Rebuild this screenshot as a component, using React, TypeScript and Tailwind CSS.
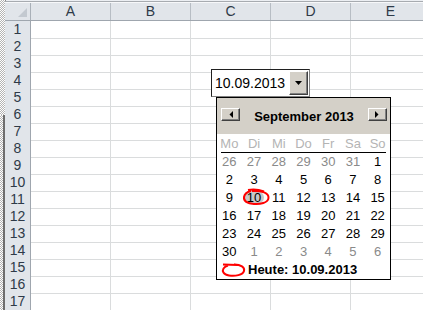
import React from "react";

const cols = ["A", "B", "C", "D", "E"];
const rows = Array.from({ length: 17 }, (_, i) => i + 1);
const dayNames = ["Mo", "Di", "Mi", "Do", "Fr", "Sa", "So"];

// September 2013, Monday first; "other" days come from Aug / Oct
const weeks: { d: number; other?: boolean }[][] = [
  [26, 27, 28, 29, 30, 31].map((d) => ({ d, other: true })).concat([{ d: 1 }]),
  [2, 3, 4, 5, 6, 7, 8].map((d) => ({ d })),
  [9, 10, 11, 12, 13, 14, 15].map((d) => ({ d })),
  [16, 17, 18, 19, 20, 21, 22].map((d) => ({ d })),
  [23, 24, 25, 26, 27, 28, 29].map((d) => ({ d })),
  [{ d: 30 }].concat([1, 2, 3, 4, 5, 6].map((d) => ({ d, other: true }))),
];

function NavButton({ dir }: { dir: "left" | "right" }) {
  return (
    <div className="w-[19px] h-[13px] bg-[#d4d0c8] border border-t-white border-l-white border-r-[#404040] border-b-[#404040] flex items-center justify-center shadow-[inset_-1px_-1px_0_#808080]">
      <svg width="4" height="7" viewBox="0 0 4 7">
        {dir === "left" ? (
          <polygon points="4,0 4,7 0.5,3.5" fill="#000" />
        ) : (
          <polygon points="0,0 0,7 3.5,3.5" fill="#000" />
        )}
      </svg>
    </div>
  );
}

export default function App() {
  return (
    <div className="relative w-[423px] h-[310px] overflow-hidden bg-white font-['Liberation_Sans',Arial,sans-serif] flex">
      {/* splitter strip on the far left */}
      <div className="w-[5px] flex flex-col shrink-0">
        <div className="h-[115px] bg-[image:repeating-conic-gradient(#b4b4b4_0_25%,#ffffff_0_50%)] bg-[length:2px_2px]" />
        <div className="flex-1 flex">
          <div className="w-[3px] bg-[image:repeating-conic-gradient(#b4b4b4_0_25%,#ffffff_0_50%)] bg-[length:2px_2px]" />
          <div className="w-[2px] bg-[#6e6e6e]" />
        </div>
      </div>

      <div className="flex-1 flex flex-col">
        {/* top strip */}
        <div className="h-[3px] bg-[#eceff3] border-l border-[#8c8c8c]" />
        <div className="h-[1px] bg-[#a7abb0]" />
        <div className="h-[3px] bg-[#f7f8fa]" />

        {/* column headers */}
        <div className="grid grid-cols-[26px_80px_80px_80px_80px_80px] h-[18px] bg-[#e1e5ea] border-b border-[#9fa6ae] text-[#2e3a48] text-[14px] leading-[17px]">
          <div className="border-r border-[#a9b0b8] relative">
            <svg className="absolute right-[3px] bottom-[3px]" width="9" height="9" viewBox="0 0 9 9">
              <polygon points="9,0 9,9 0,9" fill="#c3c9d0" />
            </svg>
          </div>
          {cols.map((c) => (
            <div key={c} className="border-r border-[#b7bdc4] text-center">
              {c}
            </div>
          ))}
        </div>

        {/* rows */}
        {rows.map((r) => (
          <div key={r} className="grid grid-cols-[26px_80px_80px_80px_80px_80px] h-[17px] shrink-0">
            <div className="bg-[#e1e5ea] border-r border-b border-r-[#9fa6ae] border-b-[#c3c9d0] text-center text-[14px] leading-[17px] text-[#2e3a48]">
              {r}
            </div>
            {cols.map((c) => (
              <div key={c} className="border-r border-b border-[#dadcdd]" />
            ))}
          </div>
        ))}
      </div>

      {/* date input over C4 */}
      <div className="absolute left-[211px] top-[69px] w-[99px] h-[28px] bg-white border border-[#202020] border-r-[#808080] border-b-[#808080] flex">
        <div className="flex-1 pl-[3px] text-[14px] leading-[26px] text-black">10.09.2013</div>
        <div className="w-[19px] my-[1px] mr-[1px] bg-[#d4d0c8] border border-t-white border-l-white border-r-[#404040] border-b-[#404040] flex items-center justify-center shadow-[inset_-1px_-1px_0_#808080]">
          <svg width="7" height="4" viewBox="0 0 7 4">
            <polygon points="0,0 7,0 3.5,4" fill="#000" />
          </svg>
        </div>
      </div>

      {/* calendar popup */}
      <div className="absolute left-[216px] top-[97px] w-[175px] h-[183px] bg-white border border-black flex flex-col text-[13px] text-black">
        <div className="h-[36px] bg-[#d4d0c8] flex items-start justify-between pl-[4px] pr-[3px] pt-[10px]">
          <NavButton dir="left" />
          <span className="font-bold leading-[14px] mt-[2px]">September 2013</span>
          <NavButton dir="right" />
        </div>
        <div className="grid grid-cols-7 h-[18px] leading-[20px] text-center text-[#b4b4b4]">
          {dayNames.map((n) => (
            <div key={n}>{n}</div>
          ))}
        </div>
        <div className="mx-[4px] h-[1px] bg-black" />
        {weeks.map((w, i) => (
          <div key={i} className="grid grid-cols-7 h-[18px] leading-[18px] text-center">
            {w.map((cell, j) => (
              <div key={j} className={cell.other ? "text-[#8a8a8a]" : ""}>
                {cell.d === 10 && !cell.other ? (
                  <span className="inline-block px-[3px] rounded-full bg-[#c8c8c8] leading-[13px]">10</span>
                ) : (
                  cell.d
                )}
              </div>
            ))}
          </div>
        ))}
        <div className="h-[18px] flex items-center pl-[5px] font-bold leading-[18px]">
          <svg width="26" height="18" viewBox="0 0 26 18" className="overflow-visible shrink-0">
            <path d="M1 3.5 L15 4 M12 3.6 C19 3.8 23 6 22 10 C21 14 13 15.5 7 14.5 C1 13.5 0 10 1.5 7.5 C2.5 6 4 5 6 4.5" fill="none" stroke="#ff0000" strokeWidth="2" />
          </svg>
          <span>Heute: 10.09.2013</span>
        </div>

        {/* red hand-drawn circle around today's date */}
        <svg className="absolute left-[25px] top-[91px] overflow-visible" width="28" height="18" viewBox="0 0 28 18">
          <path d="M6 1 C12 0 18 1 22 2.5 M10 2 C20 1.5 27 4 26.5 9 C26 14 18 15.5 12 15 C5 14.5 1.5 12 2 8 C2.5 5 5 3 9 2" fill="none" stroke="#ff0000" strokeWidth="2" />
        </svg>
      </div>
    </div>
  );
}
